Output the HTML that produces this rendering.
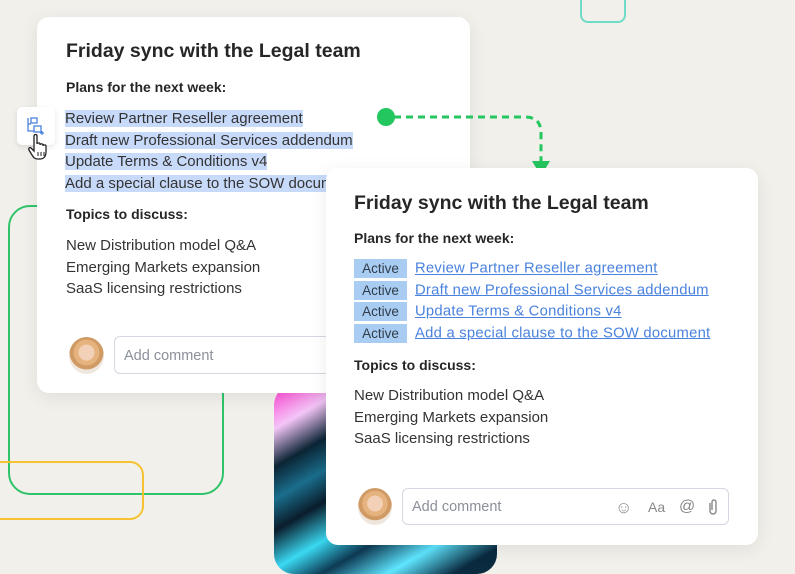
<!DOCTYPE html>
<html><head><meta charset="utf-8"><style>
*{box-sizing:border-box;margin:0;padding:0}
html,body{width:795px;height:574px;overflow:hidden}
body{background:#f2f0eb;position:relative;font-family:"Liberation Sans",Arial,sans-serif;color:#2b2b2b}
.abs{position:absolute}
.card{position:absolute;background:#fff;border-radius:12px;box-shadow:0 4px 18px rgba(0,0,0,0.08)}
.title{position:absolute;font-size:19.5px;font-weight:bold;color:#262626;white-space:nowrap}
.h{position:absolute;font-size:14px;font-weight:bold;color:#262626;white-space:nowrap}
.ln{position:absolute;font-size:15px;color:#333;white-space:nowrap;line-height:21.6px}
.sel{background:#c8dafa}
.badge{display:inline-block;background:#a9cdf2;color:#2f3b48;font-size:13.5px;width:53px;text-align:center;height:19px;line-height:19px;margin-right:8px;vertical-align:middle}
.lk{color:#4a82de;text-decoration:underline;font-size:14.8px;letter-spacing:.25px;vertical-align:middle}
.row{position:absolute;left:28px;white-space:nowrap;height:21.5px}
.box{position:absolute;border:1px solid #d4d8e0;border-radius:6px;font-size:14.5px;color:#8a8f99;padding-left:9px}
.av{position:absolute;border-radius:50%;background:radial-gradient(circle at 50% 42%,#f3d1b8 0 28%,#e6b27e 30% 45%,#d09a64 48% 60%,#efe6de 62%)}
</style></head><body>
<div class="abs" style="left:580px;top:-20px;width:46px;height:43px;border:2.5px solid #6fdcc6;border-radius:8px"></div>
<div class="abs" style="left:8px;top:205px;width:216px;height:290px;border:2.5px solid #2fc46a;border-radius:22px"></div>
<div class="abs" style="left:-30px;top:461px;width:174px;height:59px;border:2.5px solid #f7c232;border-radius:14px"></div>
<div class="abs" style="left:274px;top:385px;width:223px;height:189px;border-radius:20px;background:
linear-gradient(150deg,#ff3ad0 0%,#f3c5f7 14%,#0b2434 26%,#1a6e8c 36%,#0a1d2c 46%,#3ad9f2 58%,#0e3a54 68%,#5fe6ff 80%,#0a2a40 92%)"></div>

<div class="card" style="left:37px;top:17px;width:433px;height:376px">
 <div class="title" style="left:29px;top:23px">Friday sync with the Legal team</div>
 <div class="h" style="left:29px;top:62px">Plans for the next week:</div>
 <div class="ln" style="left:28px;top:91px"><span class="sel">Review Partner Reseller agreement</span><br><span class="sel">Draft new Professional Services addendum</span><br><span class="sel">Update Terms &amp; Conditions v4</span><br><span class="sel">Add a special clause to the SOW document</span></div>
 <div class="h" style="left:29px;top:189px">Topics to discuss:</div>
 <div class="ln" style="left:29px;top:218px">New Distribution model Q&amp;A<br>Emerging Markets expansion<br>SaaS licensing restrictions</div>
 <div class="av" style="left:32px;top:320px;width:35px;height:37px"></div>
 <div class="box" style="left:77px;top:319px;width:330px;height:38px;line-height:38px">Add comment</div>
</div>
<div class="abs" style="left:17px;top:107px;width:38px;height:38px;background:#fff;border-radius:5px;box-shadow:0 2px 6px rgba(0,0,0,0.1)">
<svg width="38" height="38" viewBox="0 0 38 38" fill="none" stroke="#4a82de" stroke-width="1.3"><rect x="14" y="11" width="6" height="5"/><path d="M11 11v13h6M11 17h3"/><rect x="17" y="19" width="7" height="6"/><path d="M25 24v4M23 26h4"/></svg>
<svg class="abs" style="left:10px;top:26px" width="24" height="28" viewBox="0 0 24 28"><path d="M7 3c0-2 3-2 3 0v8c0-1.5 3-1.5 3 0v1c0-1.5 3-1.5 3 0v1c0-1.5 3-1.5 3 0v6c0 4-2 7-6 7h-2c-3 0-4-1-6-4l-3-5c-1-2 1-3 2-2l3 3z" fill="#fff" stroke="#222" stroke-width="1.3"/><path d="M11 19v4M14 19v4M17 19v4" stroke="#222" stroke-width="1"/></svg>
</div>

<svg class="abs" style="left:370px;top:100px" width="190" height="80"><circle cx="16" cy="17" r="9" fill="#24c65f"/><path d="M24 17H155q16 0 16 16v30" stroke="#24c65f" stroke-width="3" fill="none" stroke-dasharray="7 5"/><path d="M162 61h18l-9 15z" fill="#24c65f"/></svg>

<div class="card" style="left:326px;top:168px;width:432px;height:377px">
 <div class="title" style="left:28px;top:24px">Friday sync with the Legal team</div>
 <div class="h" style="left:28px;top:62px">Plans for the next week:</div>
 <div class="row" style="top:91px"><span class="badge">Active</span><span class="lk">Review Partner Reseller agreement</span></div>
 <div class="row" style="top:112.5px"><span class="badge">Active</span><span class="lk">Draft new Professional Services addendum</span></div>
 <div class="row" style="top:134px"><span class="badge">Active</span><span class="lk">Update Terms &amp; Conditions v4</span></div>
 <div class="row" style="top:155.5px"><span class="badge">Active</span><span class="lk">Add a special clause to the SOW document</span></div>
 <div class="h" style="left:28px;top:189px">Topics to discuss:</div>
 <div class="ln" style="left:28px;top:217px">New Distribution model Q&amp;A<br>Emerging Markets expansion<br>SaaS licensing restrictions</div>
 <div class="av" style="left:32px;top:320px;width:34px;height:37px"></div>
 <div class="box" style="left:76px;top:320px;width:327px;height:37px;line-height:37px">Add comment
  <span class="abs" style="left:212px;top:0;color:#888;font-size:17px">&#9786;</span>
  <span class="abs" style="left:245px;top:0;color:#888;font-size:14px">Aa</span>
  <span class="abs" style="left:276px;top:-1px;color:#888;font-size:16px">@</span>
  <svg class="abs" style="left:304px;top:9px" width="12" height="18" viewBox="0 0 12 18" fill="none" stroke="#888" stroke-width="1.4"><path d="M3 5v8a3 3 0 0 0 6 0V4a2 2 0 0 0-4 0v8"/></svg>
 </div>
</div>
</body></html>
